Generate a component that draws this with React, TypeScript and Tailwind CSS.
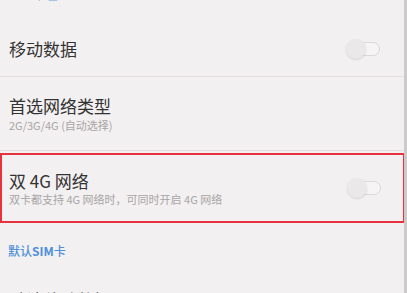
import React from "react";

function Toggle() {
  return (
    <div className="relative w-[34px] h-[20px] shrink-0">
      <div className="absolute left-[6px] right-0 top-[3px] h-[14px] rounded-full border border-[#dcd8d9] bg-[#f6f4f5]" />
      <div className="absolute left-0 top-0 w-[20px] h-[20px] rounded-full bg-[#ebe8e9] shadow-[0_1px_2px_rgba(0,0,0,0.12)]" />
    </div>
  );
}

export default function App() {
  return (
    <div
      className="w-[407px] h-[293px] overflow-hidden bg-[#f3f0f1] border-r-[3px] border-[#cdcacb] flex flex-col"
      style={{ fontFamily: '"Noto Sans CJK SC", "Noto Sans", sans-serif' }}
    >
      <div className="h-[22px] overflow-hidden shrink-0">
        <div className="-mt-[13px] ml-[8px] text-[13px] leading-[14px] text-[#9dbde8]">SIM 卡管理</div>
      </div>
      <div className="h-[54px] shrink-0 flex items-center justify-between pl-[9px] pr-[24px]">
        <span className="text-[17px] leading-[22px] text-[#333]">移动数据</span>
        <Toggle />
      </div>
      <div className="h-px bg-[#e2dedf] shrink-0" />
      <div className="h-[73px] shrink-0 flex flex-col pl-[9px] pt-[17px]">
        <span className="text-[17px] leading-[24px] text-[#333]">首选网络类型</span>
        <span className="text-[11px] leading-[15px] text-[#a8a5a6]">2G/3G/4G (自动选择)</span>
      </div>
      <div className="h-px bg-[#e2dedf] shrink-0" />
      <div className="mt-[2px] h-[70px] shrink-0 w-[405px] border-2 border-[#e6333d] flex items-center justify-between pl-[7px] pr-[22px]">
        <div className="flex flex-col">
          <span className="text-[17px] leading-[23px] text-[#333]">双 4G 网络</span>
          <span className="text-[11px] leading-[15px] text-[#a8a5a6]">双卡都支持 4G 网络时，可同时开启 4G 网络</span>
        </div>
        <Toggle />
      </div>
      <div className="mt-[20px] pl-[8px] text-[12px] leading-[15px] text-[#4d8fd8] font-medium">
        默认<span className="font-bold">SIM</span>卡
      </div>
      <div className="mt-[31px] pl-[9px] text-[17px] leading-[22px] text-[#333]">默认移动数据</div>
    </div>
  );
}
